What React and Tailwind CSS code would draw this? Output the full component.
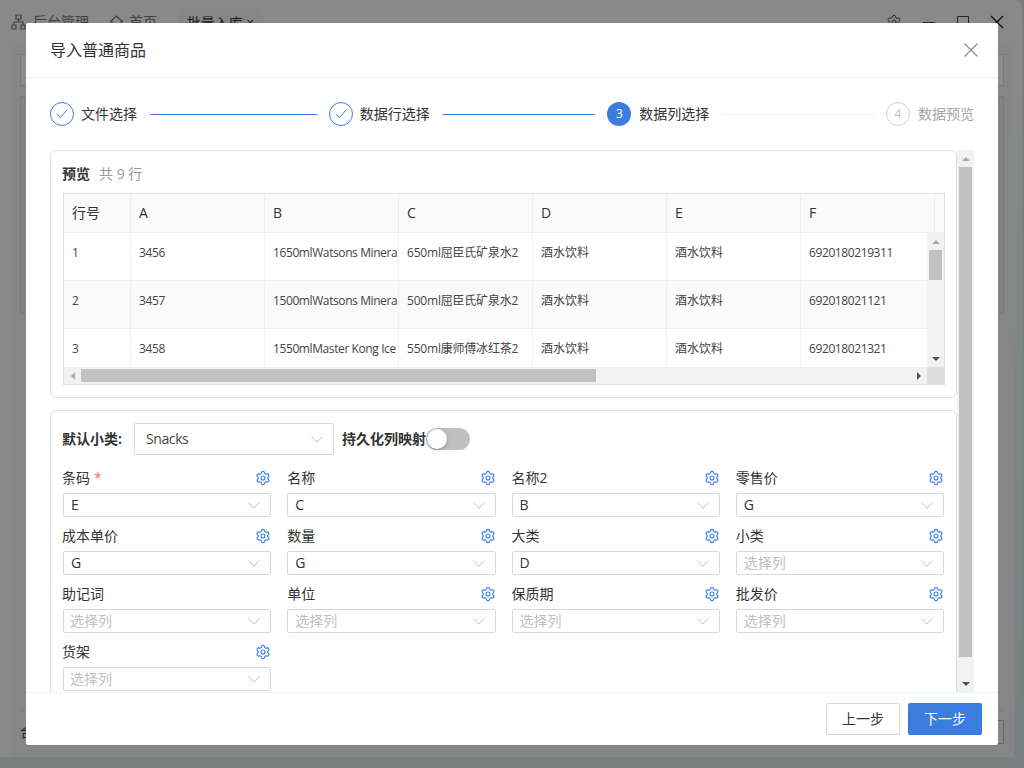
import { Settings } from 'lucide-react';

const COLUMNS = ['行号', 'A', 'B', 'C', 'D', 'E', 'F'];

const ROWS = [
  ['1', '3456', '1650mlWatsons Minera', '650ml屈臣氏矿泉水2', '酒水饮料', '酒水饮料', '6920180219311'],
  ['2', '3457', '1500mlWatsons Minera', '500ml屈臣氏矿泉水2', '酒水饮料', '酒水饮料', '692018021121'],
  ['3', '3458', '1550mlMaster Kong Ice', '550ml康师傅冰红茶2', '酒水饮料', '酒水饮料', '692018021321'],
];

const FIELDS = [
  { label: '条码', value: 'E', required: true, gear: true },
  { label: '名称', value: 'C', gear: true },
  { label: '名称2', value: 'B', gear: true },
  { label: '零售价', value: 'G', gear: true },
  { label: '成本单价', value: 'G', gear: true },
  { label: '数量', value: 'G', gear: true },
  { label: '大类', value: 'D', gear: true },
  { label: '小类', gear: true },
  { label: '助记词' },
  { label: '单位', gear: true },
  { label: '保质期', gear: true },
  { label: '批发价', gear: true },
  { label: '货架', gear: true },
];

function cellTracking(i) {
  if (i === 4 || i === 5) return '';
  return i === 3 ? 'tracking-[-0.2px]' : 'tracking-[-0.4px]';
}

function Chevron() {
  return (
    <svg width="12" height="7" viewBox="0 0 12 7" fill="none" stroke="#bfbfbf" strokeWidth="1" className="shrink-0">
      <path d="M0.5 0.5 6 6.2 11.5 0.5" />
    </svg>
  );
}

function Arrow({ dir, color = '#a8a8a8' }) {
  const points = {
    up: '0,5 4,1 8,5',
    down: '0,1 8,1 4,5',
    left: '5,0 5,8 1,4',
    right: '1,0 1,8 5,4',
  };
  const vertical = dir === 'up' || dir === 'down';
  return (
    <svg width={vertical ? 8 : 6} height={vertical ? 6 : 8} viewBox={vertical ? '0 0 8 6' : '0 0 6 8'} fill={color}>
      <polygon points={points[dir]} />
    </svg>
  );
}

function DoneStep({ label }) {
  return (
    <div className="flex flex-1 items-center">
      <div className="flex h-6 w-6 items-center justify-center rounded-full border border-[#3b7ddd]">
        <svg width="12" height="10" viewBox="0 0 12 10" fill="none" stroke="#3b7ddd" strokeWidth="1">
          <path d="M0.8 5 4.4 8.6 11.2 0.8" />
        </svg>
      </div>
      <span className="ml-[7px] text-sm text-[#333333]">{label}</span>
      <div className="mr-3 ml-[13px] h-px flex-1 bg-[#3b7ddd]" />
    </div>
  );
}

function Steps() {
  return (
    <div className="flex h-6 items-center">
      <DoneStep label="文件选择" />
      <DoneStep label="数据行选择" />
      <div className="flex flex-1 items-center">
        <div className="flex h-6 w-6 items-center justify-center rounded-full bg-[#3b7ddd] text-xs text-white">3</div>
        <span className="ml-2 text-sm text-[#333333]">数据列选择</span>
        <div className="mx-3 h-px flex-1 bg-[#eeeeee]" />
      </div>
      <div className="flex w-[88px] items-center">
        <div className="flex h-6 w-6 items-center justify-center rounded-full border border-[#d0d0d0] text-xs text-[#bfbfbf]">4</div>
        <span className="ml-2 text-sm whitespace-nowrap text-[#a6a6a6]">数据预览</span>
      </div>
    </div>
  );
}

function PreviewTable() {
  return (
    <div className="h-[192px] overflow-hidden border border-[#dddddd] bg-white">
      <div className="flex h-[39px] border-b border-[#eeeeee] bg-[#fafafa]">
        {COLUMNS.map((col, i) => (
          <div
            key={col}
            className={`flex shrink-0 items-center border-r border-[#eeeeee] pl-2 text-sm text-[#333333] ${i === 0 ? 'w-[67px]' : 'w-[134px]'}`}
          >
            {col}
          </div>
        ))}
      </div>
      <div className="flex h-[134px]">
        <div className="min-w-0 flex-1 overflow-hidden">
          {ROWS.map((row, r) => (
            <div key={row[0]} className={`flex h-12 border-b border-[#f0f0f0] ${r === 1 ? 'bg-[#fafafa]' : 'bg-white'}`}>
              {row.map((cell, i) => (
                <div
                  key={i}
                  className={`flex shrink-0 items-center overflow-hidden border-r border-[#f0f0f0] pb-2 pl-2 text-xs whitespace-nowrap text-[#444444] ${i === 0 ? 'w-[67px]' : 'w-[134px]'} ${cellTracking(i)}`}
                >
                  {cell}
                </div>
              ))}
            </div>
          ))}
        </div>
        <div className="flex w-[17px] shrink-0 flex-col bg-[#f1f1f1]">
          <div className="flex h-[17px] items-center justify-center"><Arrow dir="up" /></div>
          <div className="mx-0.5 h-[30px] bg-[#c1c1c1]" />
          <div className="flex-1" />
          <div className="flex h-[17px] items-center justify-center"><Arrow dir="down" color="#505050" /></div>
        </div>
      </div>
      <div className="flex h-[17px]">
        <div className="flex flex-1 bg-[#f1f1f1]">
          <div className="flex w-[17px] items-center justify-center"><Arrow dir="left" /></div>
          <div className="my-0.5 w-[515px] bg-[#c1c1c1]" />
          <div className="flex-1" />
          <div className="flex w-[17px] items-center justify-center"><Arrow dir="right" color="#505050" /></div>
        </div>
        <div className="w-[17px] bg-[#dcdcdc]" />
      </div>
    </div>
  );
}

function Field({ label, value, required, gear, first }) {
  return (
    <div>
      <div className="flex h-[22px] items-center justify-between text-sm text-[#333333]">
        <span className={first ? '-ml-px' : ''}>
          {label}
          {required && <span className="ml-1 text-[#f56c6c]">*</span>}
        </span>
        {gear && <Settings size={16} strokeWidth={1.7} className="text-[#3b7ddd]" />}
      </div>
      <div className="mt-1 flex h-6 items-center justify-between rounded-[2px] border border-[#d9d9d9] pr-[10px] pl-[7px] text-sm">
        {value ? <span className="text-[#333333]">{value}</span> : <span className={`text-[#bfbfbf] ${first ? '-ml-px' : ''}`}>选择列</span>}
        <Chevron />
      </div>
    </div>
  );
}

function MappingCard() {
  return (
    <div className="mt-3 rounded-md border border-[#dddddd] px-3 pt-3 pb-3">
      <div className="flex h-8 items-center">
        <span className="-ml-px text-sm font-bold text-[#333333]">默认小类:</span>
        <div className="ml-3 flex h-8 w-[200px] items-center justify-between rounded-[2px] border border-[#d9d9d9] pr-[10px] pl-[11px] text-sm tracking-[-0.4px] text-[#444444]">
          Snacks
          <Chevron />
        </div>
        <span className="ml-2 text-sm font-bold text-[#333333]">持久化列映射</span>
        <div className="relative h-[22px] w-11 rounded-full bg-[#bfbfbf]">
          <div className="absolute top-px left-px h-5 w-5 rounded-full bg-white shadow-[0_1px_3px_rgba(0,0,0,0.3)]" />
        </div>
      </div>
      <div className="mt-3 grid grid-cols-4 gap-x-4 gap-y-2">
        {FIELDS.map((field, i) => (
          <Field key={field.label} {...field} first={i % 4 === 0} />
        ))}
      </div>
    </div>
  );
}

function Modal() {
  return (
    <div className="absolute top-[23px] left-[26px] flex h-[722px] w-[972px] flex-col rounded-[2px] bg-white">
      <div className="flex h-[55px] shrink-0 items-center justify-between border-b border-[#eeeeee] pr-5 pl-6">
        <span className="text-base text-[#333333]">导入普通商品</span>
        <svg width="14" height="14" viewBox="0 0 14 14" stroke="#8c8c8c" strokeWidth="1.2" fill="none">
          <path d="M0.5 0.5 13.5 13.5M13.5 0.5 0.5 13.5" />
        </svg>
      </div>

      <div className="flex min-h-0 flex-1 flex-col px-6 pt-6">
        <Steps />
        <div className="mt-6 flex min-h-0 flex-1">
          <div className="min-w-0 flex-1 overflow-hidden">
            <div className="rounded-md border border-[#dddddd] pt-3 pr-[11px] pb-3 pl-3">
              <div className="mb-2 -ml-px flex h-[22px] items-center text-sm">
                <span className="font-bold text-[#333333]">预览</span>
                <span className="ml-[9px] text-[#999999]">共 9 行</span>
              </div>
              <PreviewTable />
            </div>
            <MappingCard />
          </div>
          <div className="flex w-[17px] shrink-0 flex-col bg-[#f1f1f1]">
            <div className="flex h-[17px] items-center justify-center"><Arrow dir="up" /></div>
            <div className="mx-0.5 h-[490px] bg-[#c1c1c1]" />
            <div className="flex-1" />
            <div className="flex h-[17px] items-center justify-center"><Arrow dir="down" color="#505050" /></div>
          </div>
        </div>
      </div>

      <div className="flex h-[53px] shrink-0 items-center justify-end gap-2 border-t border-[#eeeeee] pr-4">
        <button type="button" className="h-8 w-[74px] rounded-[2px] border border-[#d9d9d9] bg-white text-sm text-[#333333]">上一步</button>
        <button type="button" className="h-8 w-[74px] rounded-[2px] bg-[#3b7ddd] text-sm text-white">下一步</button>
      </div>
    </div>
  );
}

function TopBar() {
  return (
    <div className="flex h-11 shrink-0 items-center pr-[10px] pl-[11px] text-sm text-[#777777]">
      <svg width="15" height="16" viewBox="0 0 15 16" fill="none" stroke="#777777" strokeWidth="1.2">
        <path d="M5 1h5v4H5zM1 11h4v4H1zM10 11h4v4h-4zM7.5 5v3M3 11V8h9v3" />
      </svg>
      <span className="ml-[7px]">后台管理</span>
      <svg width="15" height="14" viewBox="0 0 15 14" fill="none" stroke="#777777" strokeWidth="1.2" className="ml-5">
        <path d="M1 7 7.5 1 14 7M3 6v7h9V6" />
      </svg>
      <span className="ml-[5px]">首页</span>
      <div className="ml-[21px] flex h-9 w-[85px] self-end items-center justify-center rounded-t-md bg-[#f4f4f4] pb-[6px] text-[#333333]">批量入库 ×</div>
      <div className="ml-auto flex items-center gap-[19px] text-black">
        <Settings size={16} strokeWidth={1.4} className="text-[#444444]" />
        <svg width="14" height="14" viewBox="0 0 14 14" stroke="#444444" fill="none" className="ml-[1px]"><path d="M1 7.5h12" /></svg>
        <svg width="14" height="14" viewBox="0 0 14 14" stroke="#444444" fill="none" className="ml-[1px]"><path d="M1.5 1.5h11v11h-11z" /></svg>
        <svg width="14" height="14" viewBox="0 0 14 14" stroke="#111111" strokeWidth="1.2" fill="none" className="ml-[1px]"><path d="M1 1l12 12M13 1 1 13" /></svg>
      </div>
    </div>
  );
}

function Backdrop() {
  return (
    <div className="h-[768px] w-[1022px] rounded-lg bg-gradient-to-b from-[#fbfbfb] to-[#dde8ea]">
      <div className="flex h-[757px] w-[1014px] flex-col rounded-br-lg bg-[#fafafa]">
        <TopBar />
        <div className="ml-[10px] flex min-h-0 flex-1 flex-col rounded-t-lg bg-[#f4f4f4] pt-[10px] pr-[10px] pl-[10px]">
          <div className="h-8 border border-[#dddddd] bg-white" />
          <div className="mt-[10px] h-[218px] border border-[#dddddd] bg-[#eeeeee]" />
          <div className="mt-auto flex h-[47px] items-center justify-between border-t border-[#dddddd] pb-1 text-sm text-[#444444]">
            <span>合计</span>
            <div className="h-6 w-20 border border-[#bbbbbb]" />
          </div>
        </div>
      </div>
    </div>
  );
}

export default function App() {
  return (
    <div className="relative h-[768px] w-[1024px] overflow-hidden bg-[#dde8ea] font-['Open_Sans','Noto_Sans_CJK_SC',sans-serif]">
      <Backdrop />
      <div className="absolute inset-0 bg-black/45" />
      <Modal />
    </div>
  );
}
